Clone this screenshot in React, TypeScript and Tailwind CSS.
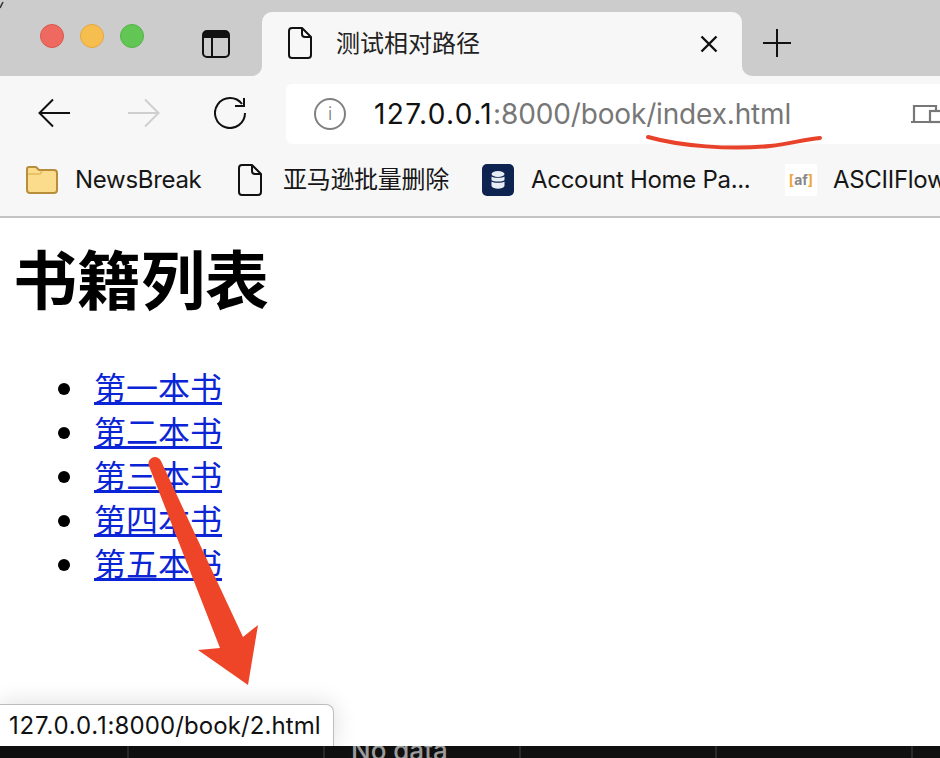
const sans = "font-['Inter','Noto_Sans_CJK_SC',sans-serif]";

function DocIcon({ className }: { className: string }) {
  return (
    <svg viewBox="0 0 24 32" className={className} fill="none" stroke="#111" strokeWidth="2" strokeLinejoin="round">
      <path d="M4 1h10l9 9v18a3 3 0 0 1-3 3H4a3 3 0 0 1-3-3V4a3 3 0 0 1 3-3z" />
      <path d="M14 1v6a3 3 0 0 0 3 3h6" />
    </svg>
  );
}

function Bookmark({ icon, label, gap, width }: { icon: React.ReactNode; label: string; gap: string; width: string }) {
  return (
    <div className={`flex items-center shrink-0 ${gap} ${width}`}>
      {icon}
      <span className="text-[24px] leading-8 tracking-[-0.3px] text-[#161616] whitespace-nowrap">{label}</span>
    </div>
  );
}

export default function App() {
  const books = ["第一本书", "第二本书", "第三本书", "第四本书", "第五本书"];
  return (
    <div className={`relative flex flex-col w-[940px] h-[758px] overflow-hidden bg-white ${sans}`}>
      {/* tab strip */}
      <div className="flex h-[76px] shrink-0 bg-[#f7f7f7]">
        <div className="flex w-[262px] h-[76px] items-start bg-[#cccccc] rounded-br-[10px] pl-10 pt-6">
          <div className="flex gap-4">
            <div className="w-6 h-6 rounded-full bg-[#ee6a60] border border-[#d9574e]" />
            <div className="w-6 h-6 rounded-full bg-[#f6bd4f] border border-[#e3a93d]" />
            <div className="w-6 h-6 rounded-full bg-[#62c655] border border-[#53b347]" />
          </div>
          <svg viewBox="0 0 28 28" className="w-7 h-7 ml-[58px] mt-1.5" fill="none">
            <rect x="1" y="1" width="26" height="26" rx="4" stroke="#111" strokeWidth="2" />
            <path d="M1 8V5a4 4 0 0 1 4-4h18a4 4 0 0 1 4 4v3z" fill="#111" />
            <path d="M10 8v19" stroke="#111" strokeWidth="2" />
          </svg>
        </div>
        <div className="bg-[#cccccc] w-[480px]">
          <div className="flex items-center h-[64px] mt-3 bg-[#f7f7f7] rounded-t-[10px] pl-[26px] pr-[24px]">
            <DocIcon className="w-6 h-8 shrink-0 mb-0.5" />
            <span className="ml-6 text-[24px] leading-8 text-[#222] whitespace-nowrap">测试相对路径</span>
            <svg viewBox="0 0 18 18" className="w-[18px] h-[18px] ml-auto" stroke="#111" strokeWidth="2.4">
              <path d="M1.5 1.5l15 15M16.5 1.5l-15 15" />
            </svg>
          </div>
        </div>
        <div className="flex-1 bg-[#cccccc] rounded-bl-[10px] pl-[21px] pt-[29px]">
          <svg viewBox="0 0 28 28" className="w-7 h-7" stroke="#111" strokeWidth="2">
            <path d="M14 0v28M0 14h28" />
          </svg>
        </div>
      </div>

      {/* toolbar */}
      <div className="flex items-center h-[74px] shrink-0 bg-[#f7f7f7] pl-[38px]">
        <svg viewBox="0 0 32 30" className="w-8 h-[30px] shrink-0" fill="none" stroke="#111" strokeWidth="2">
          <path d="M32 15H2M15 1.5L1.5 15 15 28.5" />
        </svg>
        <svg viewBox="0 0 32 30" className="w-8 h-[30px] ml-[58px] shrink-0" fill="none" stroke="#cfcfcf" strokeWidth="2">
          <path d="M0 15h30M17 1.5L30.5 15 17 28.5" />
        </svg>
        <svg viewBox="0 0 32 32" className="w-8 h-8 ml-[54px] shrink-0" fill="none" stroke="#111" strokeWidth="2">
          <path d="M28 7A15 15 0 1 0 31 16" />
          <path d="M30 1v8h-9" />
        </svg>
        <div className="flex items-center flex-1 h-[60px] ml-10 mt-0.5 bg-white rounded-l-[6px] pl-7">
          <div className="flex items-center justify-center w-8 h-8 shrink-0 rounded-full border-2 border-[#808080]">
            <span className="text-[18px] leading-none text-[#777] font-light">i</span>
          </div>
          <div className="ml-7 text-[28px] leading-9 whitespace-nowrap">
            <span className="text-[#111] tracking-[1.4px]">127.0.0.1</span>
            <span className="text-[#777] tracking-[-0.15px]">:8000/book/index.html</span>
          </div>
          <svg viewBox="0 0 30 20" className="w-[30px] h-5 ml-auto shrink-0" fill="none" stroke="#777" strokeWidth="2.2">
            <path d="M1 18h18M4 17V2h22v4" />
            <rect x="20" y="7" width="14" height="11" />
          </svg>
        </div>
      </div>

      {/* bookmarks */}
      <div className="flex items-center h-[68px] shrink-0 bg-[#f7f7f7] border-b-2 border-[#c4c4c4] pl-[26px] pb-[6px]">
        <Bookmark
          width="w-[212px]"
          gap="gap-[17px]"
          icon={
            <svg viewBox="0 0 32 28" className="w-8 h-7 shrink-0">
              <path d="M3 1h7l3 3h15a3 3 0 0 1 3 3v17a3 3 0 0 1-3 3H4a3 3 0 0 1-3-3V3a2 2 0 0 1 2-2z" fill="#fbdc8c" stroke="#b78f3c" strokeWidth="2" />
              <path d="M2 8h12l2-3" fill="none" stroke="#e2b95a" strokeWidth="1.5" />
            </svg>
          }
          label="NewsBreak"
        />
        <Bookmark
          width="w-[244px]"
          gap="gap-[21px]"
          icon={<DocIcon className="w-6 h-8 shrink-0" />}
          label="亚马逊批量删除"
        />
        <Bookmark
          width="w-[303px]"
          gap="gap-[17px]"
          icon={
            <div className="flex items-center justify-center w-8 h-8 shrink-0 rounded-[5px] bg-[#0d2350]">
              <svg viewBox="0 0 14 18" className="w-3.5 h-[18px]" fill="#e8edf5">
                <ellipse cx="7" cy="3" rx="6.5" ry="3" />
                <path d="M.5 5.5C2 7.3 12 7.3 13.5 5.5V9C12 11 2 11 .5 9zM.5 10.5C2 12.3 12 12.3 13.5 10.5V15C12 18.5 2 18.5 .5 15z" />
              </svg>
            </div>
          }
          label="Account Home Pa..."
        />
        <Bookmark
          width="w-[160px]"
          gap="gap-4"
          icon={
            <div className="flex items-center justify-center w-8 h-8 shrink-0 bg-white text-[14px] font-bold leading-none">
              <span className="text-[#f0a63a]">[</span>
              <span className="text-[#888]">af</span>
              <span className="text-[#f0a63a]">]</span>
            </div>
          }
          label="ASCIIFlow"
        />
      </div>

      {/* page */}
      <div className="relative flex-1 bg-white font-['Noto_Sans_CJK_SC',sans-serif] text-black">
        <h1 className="text-[64px] leading-[76px] font-bold pl-[13px] mt-5">书籍列表</h1>
        <ul className="flex flex-col pl-[58px] mt-[50px] text-[32px] leading-[44px]">
          {books.map((b) => (
            <li key={b} className="flex items-center gap-6">
              <span className="w-3 h-3 mt-[6px] rounded-full bg-black" />
              <a className="text-[#0b24d6] underline" href="#">{b}</a>
            </li>
          ))}
        </ul>
        <div className={`absolute left-[-2px] bottom-0 flex items-center h-[42px] w-[336px] pl-[10px] bg-white border border-b-0 border-[#bdbdbd] rounded-tr-[8px] shadow-[0_0_24px_rgba(0,0,0,0.14)] text-[24px] text-[#111] whitespace-pre ${sans}`}>
          <span className="tracking-[0.8px]">127.0.0.1</span>
          <span className="tracking-[0.1px]">:8000/book/2.html</span>
        </div>
      </div>

      {/* dark strip below */}
      <div className="grid grid-cols-[127px_196px_196px_196px_196px_29px] h-3 shrink-0 overflow-hidden bg-[#101010]">
        <div />
        <div className="border-l-2 border-[#2a2a2a]" />
        <div className="border-l-2 border-[#2a2a2a] pl-[26px] overflow-hidden">
          <div className={`-mt-[10px] text-[26px] leading-[30px] font-medium text-[#9b9b9b] whitespace-nowrap ${sans}`}>No data</div>
        </div>
        <div className="border-l-2 border-[#2a2a2a]" />
        <div className="border-l-2 border-[#2a2a2a]" />
        <div className="border-l-2 border-[#2a2a2a]" />
      </div>

      {/* annotations */}
      <svg viewBox="0 0 940 758" className="absolute inset-0 w-[940px] h-[758px] pointer-events-none">
        <path d="M648 137C680 146 730 150 770 146C790 144 805 139 820 138" fill="none" stroke="#e8432a" strokeWidth="4" strokeLinecap="round" />
        <path d="M149 466a6.5 6.5 0 0 1 12-5L243 637L258 625L248 685L198 650L220 648Z" fill="#ee4528" />
        <path d="M0 8L3 2" stroke="#333" strokeWidth="1.5" />
      </svg>
    </div>
  );
}
